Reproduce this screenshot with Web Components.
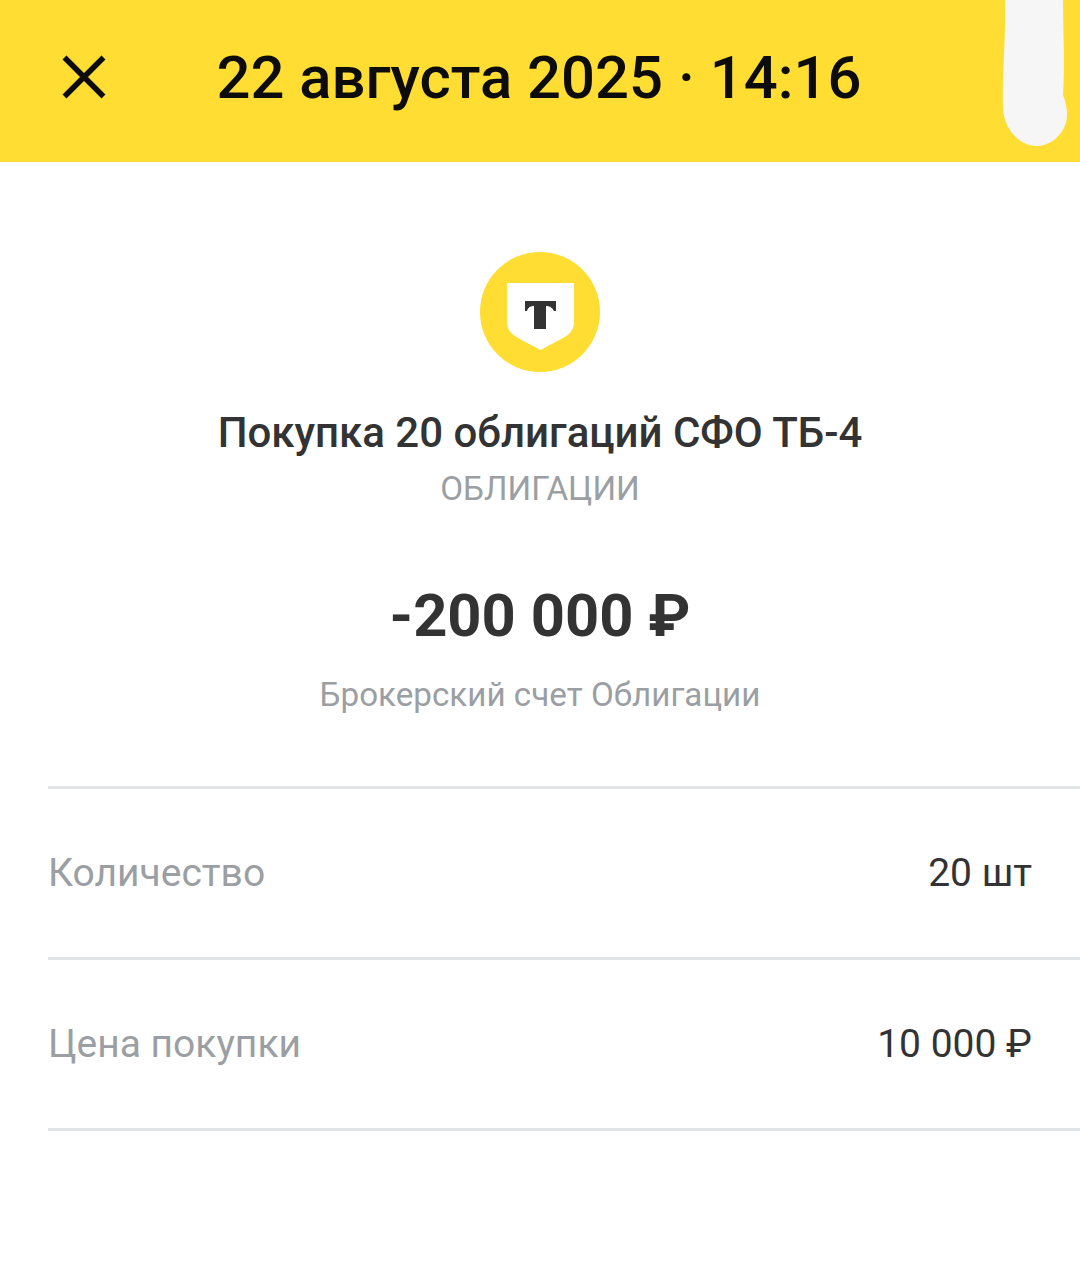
<!DOCTYPE html>
<html lang="ru"><head><meta charset="utf-8"><title>Операция</title>
<style>html,body{margin:0;background:#fff;font-family:Roboto,"Liberation Sans",sans-serif}</style>
</head><body>
<op-screen>
<op-header slot="header">22 августа 2025 · 14:16</op-header>
<op-summary slot="summary" title-text="Покупка 20 облигаций СФО ТБ-4" category="ОБЛИГАЦИИ" amount="-200 000 ₽" account="Брокерский счет Облигации"></op-summary>
<op-row label="Количество" value="20 шт"></op-row>
<op-row label="Цена покупки" value="10 000 ₽"></op-row>
</op-screen>
<script>
const def=(n,html,init)=>customElements.define(n,class extends HTMLElement{connectedCallback(){if(this.shadowRoot)return;const s=this.attachShadow({mode:'open'});s.innerHTML=html;init&&init(s,this)}});
def('op-screen',`<style>:host{display:block;width:1080px;height:1285px;overflow:hidden;background:#fff}
.list{padding-left:48px;display:flex;flex-direction:column}</style><slot name="header"></slot><slot name="summary"></slot><div class="list"><slot></slot></div>`);
def('op-header',`<style>:host{display:flex;align-items:center;position:relative;height:162px;padding-bottom:8px;box-sizing:border-box;background:#ffdd33;color:#0c0c0c;overflow:hidden}
svg.x{margin-left:60px;width:48px;height:48px;flex:none}
.t{margin-left:108.500px;font:500 59.800px/1 Roboto,sans-serif;white-space:nowrap;padding-top:4px}
svg.blob{position:absolute;left:1000px;top:0;width:70px;height:148px}</style>
<svg class="x" viewBox="0 0 48 48"><path d="M4.500 4.500 L43.500 43.500 M43.500 4.500 L4.500 43.500" fill="none" stroke="#0c0c0c" stroke-width="5.600"/></svg>
<span class="t"><slot></slot></span>
<svg class="blob" viewBox="0 0 70 148"><path d="M5 0 H63 C63 30 65 60 63 95 C67 105 68 115 66 123 C61 138 48 146 37 146 C20 146 4 130 3 108 C2 70 6 40 5 0Z" fill="#f6f6f6"/></svg>`);
def('op-summary',`<style>:host{display:flex;flex-direction:column;align-items:center;color:#333;text-align:center;padding-top:90px}
svg{width:120px;height:120px;display:block}
.h{font:500 42px/48px Roboto,sans-serif;margin-top:37px;white-space:nowrap}
.c{font:400 33.200px/40px Roboto,sans-serif;color:#9b9fa3;margin-top:12px}
.a{font:700 59.700px/72px Roboto,sans-serif;margin-top:71px}
.b{font:400 33.200px/40px Roboto,sans-serif;color:#9b9fa3;margin-top:23px;margin-bottom:71px}</style>
<svg viewBox="0 0 120 120"><circle cx="60" cy="60" r="60" fill="#ffdd33"/><path d="M27 31 H94 V69 C94 78 90 82 83 86 L60.500 98 L38 86 C31 82 27 78 27 69Z" fill="#fff"/><path d="M45 49 H76 V59 H74 C72 55 69 54 66 54 V77 H54 V54 C51 54 48 55 47 59 H45Z" fill="#333"/></svg>
<div class="h"></div><div class="c"></div><div class="a"></div><div class="b"></div>`,(s,e)=>{s.querySelector('.h').textContent=e.getAttribute('title-text');s.querySelector('.c').textContent=e.getAttribute('category');s.querySelector('.a').textContent=e.getAttribute('amount');s.querySelector('.b').textContent=e.getAttribute('account')});
def('op-row',`<style>:host{display:flex;justify-content:space-between;align-items:center;height:168px;border-top:3px solid #e3e4e6;padding-right:48px;font:400 39px/44px Roboto,sans-serif}
:host(:last-of-type){border-bottom:3px solid #e3e4e6}
.l{color:#9b9fa3}.v{color:#333}</style><span class="l"></span><span class="v"></span>`,(s,e)=>{s.querySelector('.l').textContent=e.getAttribute('label');s.querySelector('.v').textContent=e.getAttribute('value')});
</script>
</body></html>
